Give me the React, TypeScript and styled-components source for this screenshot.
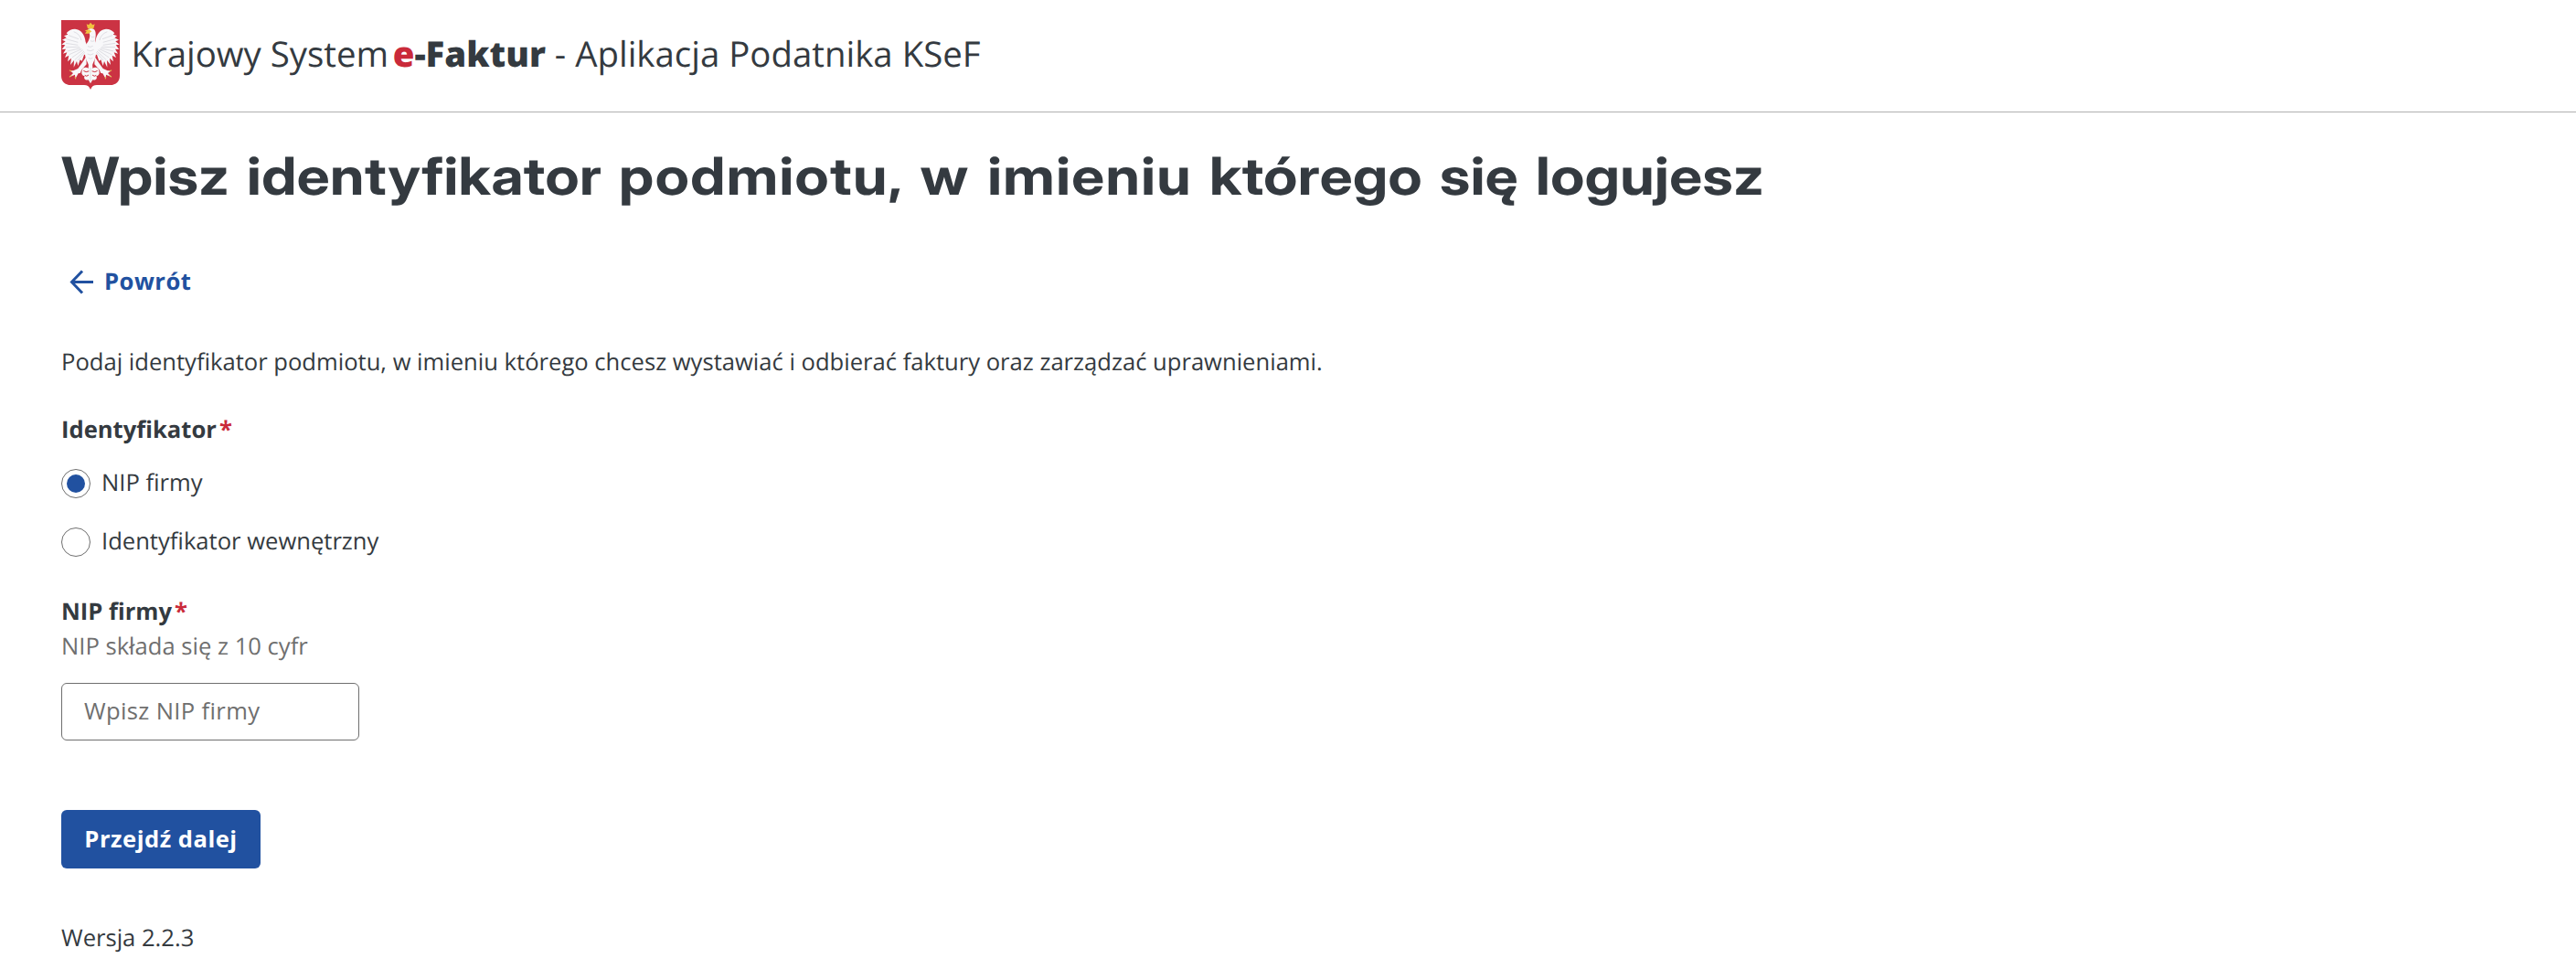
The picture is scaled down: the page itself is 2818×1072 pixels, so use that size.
import React, { useState } from "react";
import styled, { createGlobalStyle } from "styled-components";

const ink = "#343a40";
const blue = "#2151a0";
const red = "#ca2a3a";
const muted = "#6f6f6f";

const GlobalStyle = createGlobalStyle`
  *, *::before, *::after { box-sizing: border-box; }
  body {
    margin: 0;
    background: #fff;
    color: ${ink};
    font-family: "Open Sans", "Noto Sans", sans-serif;
    font-size: 25.6px;
    line-height: 36px;
    text-rendering: geometricPrecision;
  }
`;

const Header = styled.header`
  display: flex;
  align-items: center;
  gap: 12.5px;
  height: 123px;
  padding: 0 67px 3px;
  border-bottom: 1px solid #b0b0b0;
`;

const EmblemSvg = styled.svg`
  display: block;
  width: 64px;
  height: 76px;
`;

const Brand = styled.div`
  font-size: 38.4px;
  line-height: 54px;
  padding-bottom: 2px;
  white-space: pre;
`;

const BrandName = styled.span`
  font-weight: 800;
  margin-left: 4.5px;
`;

const Accent = styled.span`
  color: ${red};
`;

const Main = styled.main`
  display: flex;
  flex-direction: column;
  align-items: flex-start;
  padding: 34px 67px 0;
`;

const Title = styled.h1`
  margin: 0;
  font-family: "Inter Display", Inter, "Open Sans", sans-serif;
  font-size: 57px;
  font-weight: 700;
  line-height: 72px;
  letter-spacing: 0.4px;
  word-spacing: 4.3px;
  white-space: nowrap;
  transform: scaleX(1.12);
  transform-origin: left center;
`;

const Wide = styled.span`
  letter-spacing: 1.25px;
`;

const BackLink = styled.a`
  display: flex;
  align-items: center;
  gap: 11px;
  height: 64px;
  margin-top: 47px;
  padding-left: 9px;
  color: ${blue};
  font-weight: 700;
  letter-spacing: 0.5px;
  text-decoration: none;
`;

const BackIcon = styled.svg`
  display: block;
  width: 27px;
  height: 27px;
`;

const Intro = styled.p`
  margin: 38px 0 0;
`;

const Field = styled.fieldset<{ $top: number }>`
  display: flex;
  flex-direction: column;
  align-items: flex-start;
  min-width: 0;
  margin: ${(p) => p.$top}px 0 0;
  padding: 0;
  border: 0;
`;

const FieldLabel = styled.label`
  font-weight: 700;
`;

const Required = styled.span`
  margin-left: 3px;
  color: ${red};
`;

const RadioList = styled.div`
  display: flex;
  flex-direction: column;
  gap: 32px;
  margin-top: 25px;
`;

const RadioRow = styled.label`
  display: flex;
  align-items: center;
  gap: 12px;
  height: 32px;
  cursor: pointer;
`;

const RadioInput = styled.input`
  appearance: none;
  display: grid;
  place-items: center;
  width: 32px;
  height: 32px;
  margin: 0;
  border: 1px solid ${muted};
  border-radius: 50%;
  background: #fff;

  &:checked::before {
    content: "";
    width: 20px;
    height: 20px;
    border-radius: 50%;
    background: ${blue};
  }
`;

const RadioText = styled.span`
  padding-bottom: 2px;
`;

const Hint = styled.div`
  margin-top: 2px;
  color: ${muted};
`;

const TextInput = styled.input`
  width: 326px;
  height: 63px;
  margin-top: 22px;
  padding: 0 24px 2px;
  border: 1px solid ${muted};
  border-radius: 6px;
  background: #fff;
  color: ${ink};
  font: inherit;
  letter-spacing: 0.35px;

  &::placeholder {
    color: ${muted};
    opacity: 1;
  }
`;

const SubmitButton = styled.button`
  width: 218px;
  height: 64px;
  margin-top: 76px;
  padding: 0;
  border: 0;
  border-radius: 6px;
  background: ${blue};
  color: #fff;
  font: inherit;
  font-weight: 700;
  letter-spacing: 0.5px;
  cursor: pointer;
`;

const Version = styled.div`
  margin-top: 58px;
`;

const Wing = () => (
  <g>
    <path
      fill="#f8f8fa"
      d="M139 156 L131 138 C128 112 116 97 96 95 C84 95 74 101 68 109 L73 113 L60 118 L68 124 L54 131 L65 136 L52 146 L64 148 L53 162 L66 161 L57 176 L70 172 L63 189 L76 182 L72 202 L84 191 L81 213 L93 198 L92 221 L102 201 L106 216 L113 196 L119 200 L126 180 L138 176 Z"
    />
    <path
      fill="none"
      stroke="#c6c7ce"
      strokeWidth="1.6"
      d="M75 116 L108 128 M67 128 L106 139 M66 142 L106 148 M66 155 L110 154 M71 168 L114 158 M77 179 L118 161 M86 189 L122 164 M95 197 L126 168 M105 198 L130 170 M92 104 Q113 112 117 132"
    />
  </g>
);

const Emblem = () => (
  <EmblemSvg viewBox="51 66 192 228" aria-hidden="true">
    <path
      fill="#cb3343"
      d="M51 66 H243 V248 C243 267 231 279 211 279 H168 C158 279 151 283 147 294 C143 283 136 279 126 279 H83 C63 279 51 267 51 248 Z"
    />
    <Wing />
    <g transform="matrix(-1 0 0 1 294 0)">
      <Wing />
    </g>
    <path
      fill="#f8f8fa"
      d="M137 100 C141 91 158 90 162 101 C167 114 162 125 163 136 C164 145 170 154 166 172 C164 190 158 202 153 213 L147 224 L141 213 C136 202 129 190 128 172 C124 154 136 143 141 132 C145 123 146 116 143 109 Z"
    />
    <path
      fill="#f8f8fa"
      d="M133 186 L119 207 L106 225 L91 232 L79 232 L90 240 L78 253 L96 245 L97 259 L107 241 L113 240 L118 229 L134 211 Z M161 186 L175 207 L188 225 L203 232 L215 232 L204 240 L216 253 L198 245 L197 259 L187 241 L181 240 L176 229 L160 211 Z"
    />
    <path
      fill="#f8f8fa"
      d="M141 204 H153 L154 224 C161 218 176 222 175 234 C179 243 171 250 166 249 C171 257 164 265 154 262 L147 274 L140 262 C130 265 123 257 128 249 C123 250 115 243 119 234 C118 222 133 218 140 224 Z"
    />
    <path
      fill="none"
      stroke="#cb3343"
      strokeWidth="3"
      strokeLinecap="round"
      d="M141 234 Q132 239 125 233 M140 247 Q134 253 129 248 M153 234 Q162 239 169 233 M154 247 Q160 253 165 248"
    />
    <path
      fill="none"
      stroke="#c6c7ce"
      strokeWidth="1.6"
      d="M147 222 V266 M138 152 Q146 157 155 151 M135 164 Q147 171 158 163 M137 177 Q147 184 157 176 M140 190 Q147 196 154 190 M149 120 Q154 124 160 120 M147 134 Q153 138 160 134"
    />
    <path
      fill="#f0c23f"
      d="M138 94 L134 79 L141 82 L147 74 L154 82 L161 79 L157 94 Z M142 97 L128 100 L134 103 L129 110 L141 110 L151 103 Z"
    />
    <path
      fill="none"
      stroke="#e6ba55"
      strokeWidth="3.5"
      strokeLinecap="round"
      d="M84 233 L79 231 M84 248 L79 252 M97 253 L98 258 M210 233 L215 231 M210 248 L215 252 M197 253 L196 258"
    />
  </EmblemSvg>
);

const options = [
  { value: "nip", text: "NIP firmy" },
  { value: "internal", text: "Identyfikator wewnętrzny" },
];

export default function App() {
  const [kind, setKind] = useState("nip");
  const [nip, setNip] = useState("");

  return (
    <>
      <GlobalStyle />
      <Header>
        <Emblem />
        <Brand>
          Krajowy System
          <BrandName>
            <Accent>e</Accent>-Faktur
          </BrandName>
          {" - Aplikacja Podatnika KSeF"}
        </Brand>
      </Header>
      <Main>
        <Title>
          Wpisz identyfikator <Wide>podmiotu, w imieniu</Wide> którego się logujesz
        </Title>
        <BackLink href="#">
          <BackIcon viewBox="0 0 27 27" fill="none" stroke={blue} strokeWidth="3">
            <path d="M26 13.5H2.5M14 1.5L2.5 13.5L14 25.5" />
          </BackIcon>
          Powrót
        </BackLink>
        <Intro>
          Podaj identyfikator podmiotu, w imieniu którego chcesz wystawiać i odbierać faktury oraz
          zarządzać uprawnieniami.
        </Intro>
        <Field $top={38}>
          <FieldLabel as="div">
            Identyfikator<Required>*</Required>
          </FieldLabel>
          <RadioList>
            {options.map((o) => (
              <RadioRow key={o.value}>
                <RadioInput
                  type="radio"
                  name="kind"
                  checked={kind === o.value}
                  onChange={() => setKind(o.value)}
                />
                <RadioText>{o.text}</RadioText>
              </RadioRow>
            ))}
          </RadioList>
        </Field>
        <Field $top={42}>
          <FieldLabel htmlFor="nip">
            NIP firmy<Required>*</Required>
          </FieldLabel>
          <Hint>NIP składa się z 10 cyfr</Hint>
          <TextInput
            id="nip"
            placeholder="Wpisz NIP firmy"
            value={nip}
            onChange={(e) => setNip(e.target.value)}
          />
        </Field>
        <SubmitButton type="button">Przejdź dalej</SubmitButton>
        <Version>Wersja 2.2.3</Version>
      </Main>
    </>
  );
}
